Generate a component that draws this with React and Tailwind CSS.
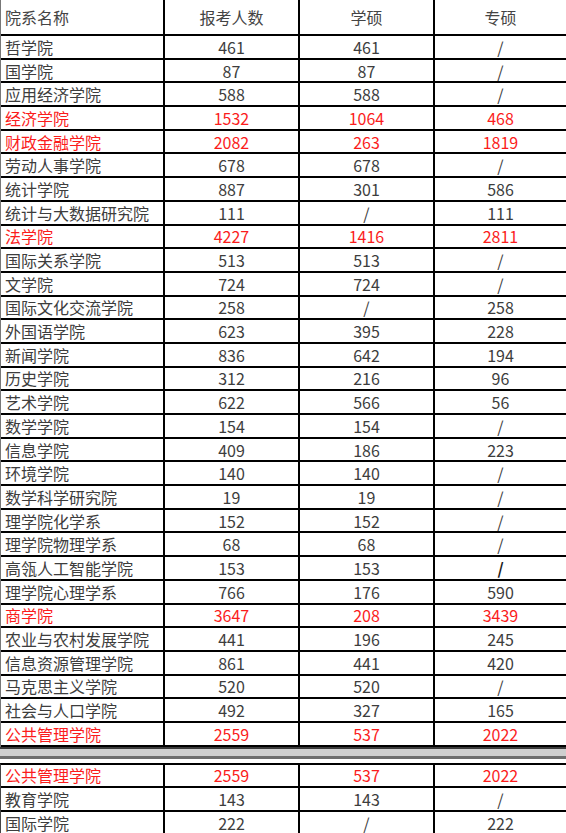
import React from 'react';

const rows = [
  ['哲学院', '461', '461', '/'],
  ['国学院', '87', '87', '/'],
  ['应用经济学院', '588', '588', '/'],
  ['经济学院', '1532', '1064', '468', true],
  ['财政金融学院', '2082', '263', '1819', true],
  ['劳动人事学院', '678', '678', '/'],
  ['统计学院', '887', '301', '586'],
  ['统计与大数据研究院', '111', '/', '111'],
  ['法学院', '4227', '1416', '2811', true],
  ['国际关系学院', '513', '513', '/'],
  ['文学院', '724', '724', '/'],
  ['国际文化交流学院', '258', '/', '258'],
  ['外国语学院', '623', '395', '228'],
  ['新闻学院', '836', '642', '194'],
  ['历史学院', '312', '216', '96'],
  ['艺术学院', '622', '566', '56'],
  ['数学学院', '154', '154', '/'],
  ['信息学院', '409', '186', '223'],
  ['环境学院', '140', '140', '/'],
  ['数学科学研究院', '19', '19', '/'],
  ['理学院化学系', '152', '152', '/'],
  ['理学院物理学系', '68', '68', '/'],
  ['高瓴人工智能学院', '153', '153', '/'],
  ['理学院心理学系', '766', '176', '590'],
  ['商学院', '3647', '208', '3439', true],
  ['农业与农村发展学院', '441', '196', '245'],
  ['信息资源管理学院', '861', '441', '420'],
  ['马克思主义学院', '520', '520', '/'],
  ['社会与人口学院', '492', '327', '165'],
  ['公共管理学院', '2559', '537', '2022', true],
];

const rows2 = [
  ['公共管理学院', '2559', '537', '2022', true],
  ['教育学院', '143', '143', '/'],
  ['国际学院', '222', '/', '222'],
];

const Row = ({ r }) => {
  const color = r[4] ? 'text-[#fb1c1c]' : 'text-[#3d3d3d]';
  const smudge = r[0] === '高瓴人工智能学院';
  return (
    <div className={`grid grid-cols-[164px_135px_135px_1fr] h-[23.7px] border-b-2 border-black ${color}`}>
      <div className="flex items-center pl-[4px] border-r-2 border-black whitespace-nowrap">{r[0]}</div>
      <div className="flex items-center justify-center border-r-2 border-black">{r[1]}</div>
      <div className="flex items-center justify-center border-r-2 border-black">{r[2]}</div>
      <div className={`flex items-center justify-center ${smudge ? 'font-bold text-[#1a1a1a]' : ''}`}>{r[3]}</div>
    </div>
  );
};

export default function App() {
  return (
    <div className="w-[566px] h-[833px] overflow-hidden bg-white text-[16px] leading-none font-['Noto_Sans_CJK_SC','Noto_Sans',sans-serif]">
      <div className="border-l border-[#777]">
        <div className="grid grid-cols-[164px_135px_135px_1fr] h-[36px] border-b-2 border-black text-[#444]">
          <div className="flex items-center pl-[4px] border-r-2 border-black">院系名称</div>
          <div className="flex items-center justify-center border-r-2 border-black">报考人数</div>
          <div className="flex items-center justify-center border-r-2 border-black">学硕</div>
          <div className="flex items-center justify-center">专硕</div>
        </div>
        {rows.map((r, i) => (
          <Row key={i} r={r} />
        ))}
      </div>

      <div className="flex flex-col">
        <div className="h-[2px] bg-[#3a3a3a]" />
        <div className="h-[7px] bg-[#cfcfcf]" />
        <div className="h-[3px] bg-[#6e6e6e]" />
        <div className="h-[4px] bg-white" />
      </div>

      <div className="border-l border-[#444] border-t-2 border-t-black">
        {rows2.map((r, i) => (
          <Row key={i} r={r} />
        ))}
      </div>
    </div>
  );
}
